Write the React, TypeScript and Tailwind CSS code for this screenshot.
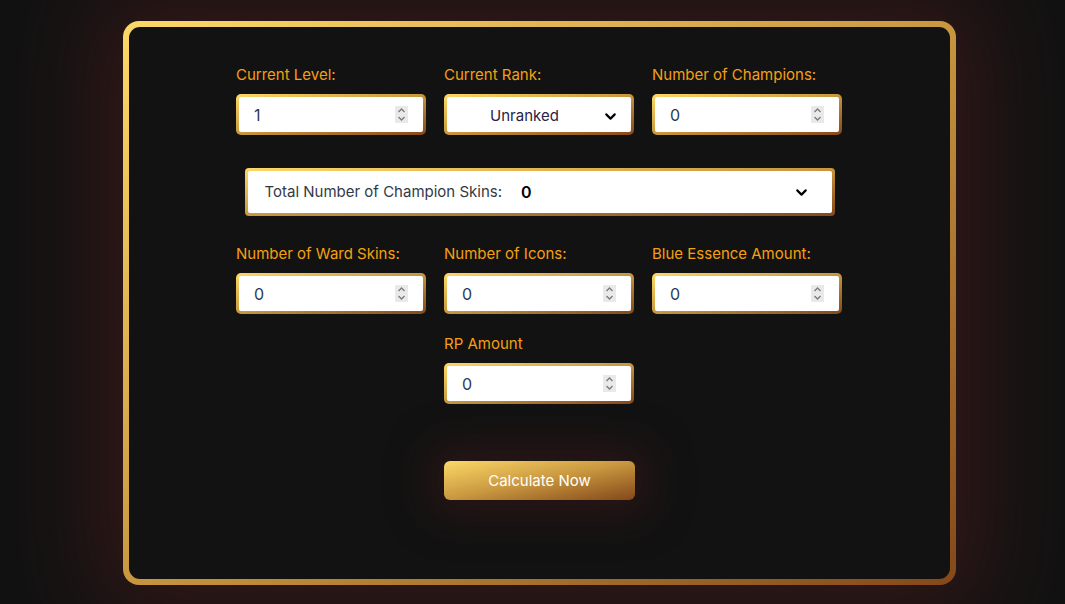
import { ChevronDown } from "lucide-react";

const gold = "bg-linear-to-br from-[#fdd968] via-[#c8973f] to-[#84481a]";

const Spinner = () => (
  <div className="absolute right-[15px] top-[9px] w-[13px] h-[17px] bg-[#e9e9e9] flex flex-col items-center justify-center">
    <svg width="9" height="15" viewBox="0 0 9 15" fill="none" stroke="#7a7a7a" strokeWidth="1.3">
      <path d="M1.5 5 L4.5 2 L7.5 5" />
      <path d="M1.5 10 L4.5 13 L7.5 10" />
    </svg>
  </div>
);

const NumberField = ({ label, value }: { label: string; value: string }) => {
  return (
    <div className="flex flex-col">
      <label className="text-[15px] leading-5 text-[#f5a012] mt-[1px] mb-[9px]">{label}</label>
      <div className={`${gold} p-[3px] rounded-[5px] h-[41px]`}>
        <div className="relative w-full h-full bg-white rounded-[2px]">
          <input
            type="text"
            defaultValue={value}
            className="w-full h-full bg-transparent pl-[15px] pr-8 text-[16px] text-[#2c3a4c] outline-none"
          />
          <Spinner />
        </div>
      </div>
    </div>
  );
};

export default function App() {
  return (
    <div
      className="min-h-[604px] w-full bg-[#121212] pt-[21px] pl-[123px] overflow-hidden"
      style={{ fontFamily: "Inter, 'Noto Sans', sans-serif" }}
    >
      <div
        className={`${gold} w-[833px] h-[564px] p-[6px] rounded-[16px] shadow-[0_0_90px_30px_rgba(62,26,26,0.75)]`}
      >
        <div className="w-full h-full bg-[#121212] rounded-[11px] pt-[37px] flex flex-col items-center">
          <div className="grid grid-cols-[190px_190px_190px] gap-x-[18px] -ml-px">
            <NumberField label="Current Level:" value="1" />
            <div className="flex flex-col">
              <label className="text-[15px] leading-5 text-[#f5a012] mt-[1px] mb-[9px]">Current Rank:</label>
              <div className={`${gold} p-[3px] rounded-[5px] h-[41px]`}>
                <div className="w-full h-full bg-white rounded-[2px] flex items-center pl-[8px] pr-[12px] pt-[3px] text-[15px] text-[#2a2340]">
                  <span className="flex-1 text-center">Unranked</span>
                  <ChevronDown size={17} strokeWidth={3} className="text-black ml-2" />
                </div>
              </div>
            </div>
            <NumberField label="Number of Champions:" value="0" />
          </div>

          <div className={`${gold} p-[3px] rounded-[4px] w-[590px] h-[48px] mt-[33px]`}>
            <div className="w-full h-full bg-white rounded-[2px] flex items-center pl-[17px] pr-[22px] text-[15px]">
              <span className="text-[#333a45]">Total Number of Champion Skins:</span>
              <span className="ml-[19px] font-semibold text-black text-[16px]">0</span>
              <ChevronDown size={17} strokeWidth={3} className="text-black ml-auto" />
            </div>
          </div>

          <div className="grid grid-cols-[190px_190px_190px] gap-x-[18px] gap-y-[19px] mt-[27px] -ml-px">
            <NumberField label="Number of Ward Skins:" value="0" />
            <NumberField label="Number of Icons:" value="0" />
            <NumberField label="Blue Essence Amount:" value="0" />
            <div />
            <NumberField label="RP Amount" value="0" />
            <div />
          </div>

          <button
            className={`${gold} mt-[57px] w-[191px] h-[39px] rounded-[6px] text-white text-[15px] pt-[2px] shadow-[0_0_40px_14px_rgba(62,26,26,0.55)]`}
          >
            Calculate Now
          </button>
        </div>
      </div>
    </div>
  );
}
